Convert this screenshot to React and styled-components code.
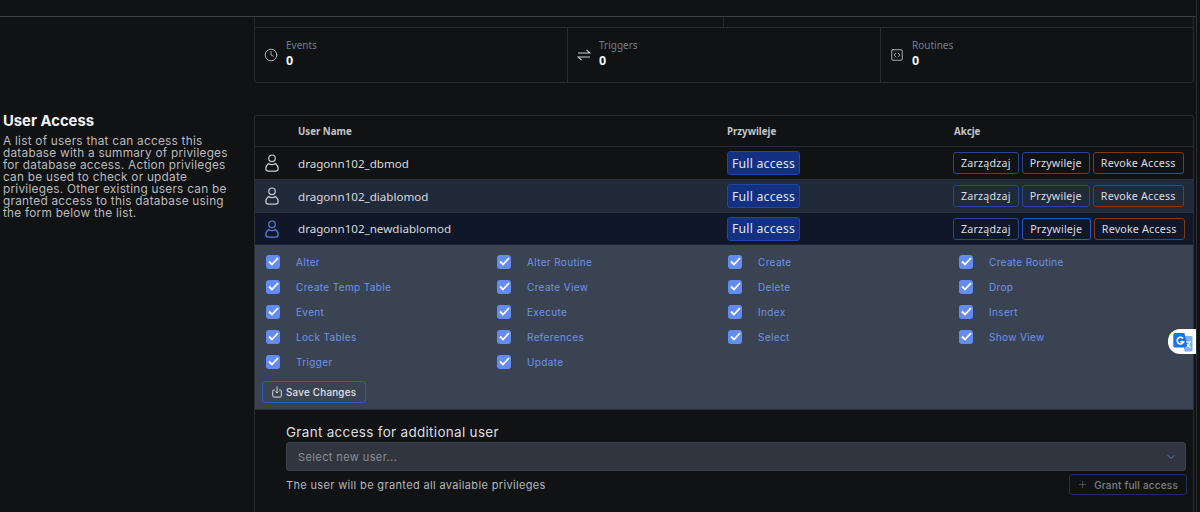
import React from 'react';
import styled, { createGlobalStyle } from 'styled-components';
import { ChevronDown, Clock, Plus, SquareCode } from 'lucide-react';

const users = ['dragonn102_dbmod', 'dragonn102_diablomod', 'dragonn102_newdiablomod'];

const privileges = [
  'Alter', 'Alter Routine', 'Create', 'Create Routine',
  'Create Temp Table', 'Create View', 'Delete', 'Drop',
  'Event', 'Execute', 'Index', 'Insert',
  'Lock Tables', 'References', 'Select', 'Show View',
  'Trigger', 'Update',
];

const UserIcon = ({ color }) => (
  <svg width="14" height="18" viewBox="0 0 14 18" fill="none" stroke={color} strokeWidth="1.2">
    <circle cx="7" cy="4.300" r="3.300" />
    <path d="M3.500 9.500C2 10.800.8 12.600.8 14.500c0 1.500 1 2.600 2.700 2.600h7c1.700 0 2.700-1.100 2.700-2.600 0-1.900-1.200-3.700-2.700-5-1 .8-2.200 1.100-3.500 1.100s-2.500-.3-3.500-1.100z" />
  </svg>
);

const TriggerIcon = () => (
  <svg width="14" height="14" viewBox="0 0 14 14" fill="none" stroke="#c9cbce" strokeWidth="1.1">
    <path d="M1 5h12L9.500 1.800" />
    <path d="M13 9H1l3.500 3.200" />
  </svg>
);

const SaveIcon = () => (
  <svg width="10" height="12" viewBox="0 0 10 12" fill="none" stroke="#d5d8dd" strokeWidth="1">
    <path d="M3 4H1.600a.9.900 0 0 0-.9.900v5c0 .7.500 1.200 1.200 1.200h6.200c.7 0 1.200-.5 1.200-1.200v-5a.9.900 0 0 0-.9-.9H7" />
    <path d="M5 .5v6.500M3.500 5.500 5 7l1.500-1.500" />
  </svg>
);

const TranslateIcon = () => (
  <svg width="20" height="20" viewBox="0 0 20 20">
    <path fill="#7fb0ee" d="M9 4h9a1.500 1.500 0 0 1 1.500 1.500V18a1.500 1.500 0 0 1-1.500 1.500h-6.500z" />
    <path fill="#1a73e8" d="M1.800 1h9.500l4 14.500H1.800A1.500 1.500 0 0 1 .3 14V2.500A1.500 1.500 0 0 1 1.800 1z" />
    <path fill="none" stroke="#fff" strokeWidth="1.500" d="M10 6.500a3.300 3.300 0 1 0 .6 3.200H7.300" />
    <path fill="none" stroke="#fff" strokeWidth="1.200" d="M13 10h5M17 10c-.5 2.500-2 4.500-3.500 5.500M14 12c.8 1.500 2 2.800 3.500 3.500" />
  </svg>
);

const App = () => {
  return (
    <>
      <GlobalStyle />
      <Page>
        <TopBar />
        <Content>
          <CutOffRow>
            <span />
            <span />
          </CutOffRow>
          <StatsCard>
            <Stat>
              <Clock size={14} strokeWidth={1.4} color="#c9cbce" />
              <StatText>
                <StatLabel>Events</StatLabel>
                <StatValue>0</StatValue>
              </StatText>
            </Stat>
            <Stat>
              <TriggerIcon />
              <StatText>
                <StatLabel>Triggers</StatLabel>
                <StatValue>0</StatValue>
              </StatText>
            </Stat>
            <Stat>
              <SquareCode size={14} strokeWidth={1.4} color="#c9cbce" />
              <StatText>
                <StatLabel>Routines</StatLabel>
                <StatValue>0</StatValue>
              </StatText>
            </Stat>
          </StatsCard>

          <AccessSection>
            <Intro>
              <IntroTitle>User Access</IntroTitle>
              <IntroText>
                A list of users that can access this database with a summary of privileges for
                database access. Action privileges can be used to check or update privileges. Other
                existing users can be granted access to this database using the form below the
                list.
              </IntroText>
            </Intro>

            <AccessCard>
              <HeaderRow>
                <span />
                <span>User Name</span>
                <span>Przywileje</span>
                <span>Akcje</span>
              </HeaderRow>

              {users.map((name, i) => {
                const open = i === 2;
                return (
                  <UserRow key={name} $variant={i}>
                    <IconCell>
                      <UserIcon color={open ? '#5b80d8' : '#c8cacd'} />
                    </IconCell>
                    <UserName>{name}</UserName>
                    <div>
                      <AccessBadge>Full access</AccessBadge>
                    </div>
                    <Actions>
                      <ActionButton>Zarządzaj</ActionButton>
                      <ActionButton $selected={open}>Przywileje</ActionButton>
                      <ActionButton $danger>Revoke Access</ActionButton>
                    </Actions>
                  </UserRow>
                );
              })}

              <PrivilegePanel>
                <PrivilegeGrid>
                  {privileges.map(p => (
                    <Privilege key={p}>
                      <CheckBox>
                        <svg width="11" height="9" viewBox="0 0 11 9" fill="none" stroke="#fff" strokeWidth="1.800">
                          <path d="M1 4.500 4 7.500 10 1" />
                        </svg>
                      </CheckBox>
                      <PrivilegeLabel>{p}</PrivilegeLabel>
                    </Privilege>
                  ))}
                </PrivilegeGrid>
                <SaveButton>
                  <SaveIcon />
                  Save Changes
                </SaveButton>
              </PrivilegePanel>

              <GrantForm>
                <GrantTitle>Grant access for additional user</GrantTitle>
                <SelectBox>
                  Select new user...
                  <ChevronDown size={12} color="#5b80d8" />
                </SelectBox>
                <GrantFooter>
                  <GrantNote>The user will be granted all available privileges</GrantNote>
                  <GrantButton>
                    <Plus size={11} strokeWidth={1.4} color="#6b6e74" />
                    Grant full access
                  </GrantButton>
                </GrantFooter>
              </GrantForm>
            </AccessCard>
          </AccessSection>
        </Content>
        <TranslateTab>
          <TranslateIcon />
        </TranslateTab>
      </Page>
    </>
  );
};

const GlobalStyle = createGlobalStyle`
  html, body {
    margin: 0;
    height: 100%;
    overflow: hidden;
    background: #111213;
  }
  * {
    box-sizing: border-box;
  }
`;

const Page = styled.div`
  position: relative;
  width: 1197px;
  height: 512px;
  overflow: hidden;
  background: #111213;
  border-right: 1px solid #2b2d30;
  font-family: 'Noto Sans', sans-serif;
  color: #e5e7eb;
`;

const TopBar = styled.div`
  height: 17px;
  border-bottom: 1px solid #3c3e41;
`;

const Content = styled.div`
  display: flex;
  flex-direction: column;
  padding-right: 2px;
`;

const CutOffRow = styled.div`
  display: grid;
  grid-template-columns: 469px 1fr;
  height: 10px;
  margin-left: 254px;
  border-left: 1px solid #26282b;
  border-right: 1px solid #26282b;

  span:first-child {
    border-right: 1px solid #26282b;
  }
`;

const StatsCard = styled.div`
  display: grid;
  grid-template-columns: 313px 313px 1fr;
  height: 56px;
  margin-left: 254px;
  border: 1px solid #2a2c2f;
  border-radius: 0 0 3px 3px;
`;

const Stat = styled.div`
  display: flex;
  align-items: center;
  gap: 8px;
  padding-left: 9px;
  border-right: 1px solid #2a2c2f;

  &:last-child {
    border-right: 0;
  }
`;

const StatText = styled.div`
  display: flex;
  flex-direction: column;
  margin-top: -2px;
`;

const StatLabel = styled.span`
  font-size: 10px;
  line-height: 13px;
  color: #6c7f92;
`;

const StatValue = styled.span`
  font-size: 12.500px;
  line-height: 17px;
  font-weight: 700;
  color: #f3f5f8;
`;

const AccessSection = styled.div`
  display: grid;
  grid-template-columns: 254px 1fr;
  margin-top: 32px;
`;

const Intro = styled.div`
  padding: 0 18px 0 3px;
  font-family: Inter, sans-serif;
`;

const IntroTitle = styled.h2`
  margin: -3px 0 5px;
  font-size: 14.800px;
  line-height: 18px;
  font-weight: 700;
  color: #f1f2f4;
`;

const IntroText = styled.p`
  margin: 0;
  font-size: 11.800px;
  line-height: 12px;
  letter-spacing: 0.25px;
  color: #b9bbbe;
`;

const AccessCard = styled.div`
  height: 400px;
  border: 1px solid #2a2c2f;
  border-radius: 3px;
  overflow: hidden;
`;

const rowColumns = `
  display: grid;
  grid-template-columns: 43px 429px 226px 1fr;
  align-items: center;
`;

const HeaderRow = styled.div`
  ${rowColumns}
  height: 31px;
  border-bottom: 1px solid #2a2c2f;
  font-size: 9.700px;
  font-weight: 700;
  color: #c4c6c9;

  span:last-child {
    padding-left: 1px;
  }
`;

const rowBackground = ['#111213', '#212a38', '#0f1729'];

const UserRow = styled.div`
  ${rowColumns}
  height: 33px;
  background: ${props => rowBackground[props.$variant]};
  border-bottom: 1px solid ${props => (props.$variant === 2 ? '#1c2433' : '#2a303a')};

  &:nth-child(4) {
    height: 32px;
  }
`;

const IconCell = styled.div`
  display: flex;
  padding-left: 10px;
`;

const UserName = styled.span`
  font-size: 11.600px;
  color: #d8dadd;
`;

const AccessBadge = styled.span`
  display: inline-flex;
  align-items: center;
  justify-content: center;
  width: 73px;
  height: 24px;
  background: #143081;
  border: 1px solid #1e46a6;
  border-radius: 3px;
  font-size: 12.300px;
  letter-spacing: 0.2px;
  color: #dfe5f2;
`;

const Actions = styled.div`
  display: flex;
  gap: 3px;
`;

const ActionButton = styled.button`
  height: 22px;
  padding: 0 ${props => (props.$selected ? '7.500px' : '7px')};
  background: transparent;
  border: ${props => (props.$selected ? '1.500px' : '1px')} solid
    ${props => (props.$danger ? '#7e3a14' : props.$selected ? '#2f5bc0' : '#27478f')};
  border-radius: 3px;
  font-family: 'Noto Sans', sans-serif;
  font-size: 10.700px;
  letter-spacing: 0.2px;
  color: #dcdee2;
`;

const PrivilegePanel = styled.div`
  height: 165px;
  padding: 4px 7px 0 7px;
  background: #3a4352;
  border-bottom: 1px solid #2b313b;
`;

const PrivilegeGrid = styled.div`
  display: grid;
  grid-template-columns: repeat(4, 231px);
  grid-auto-rows: 25px;
  padding-left: 4px;
`;

const Privilege = styled.label`
  display: flex;
  align-items: center;
  gap: 16px;
`;

const CheckBox = styled.span`
  display: flex;
  align-items: center;
  justify-content: center;
  width: 14px;
  height: 14px;
  background: #648cf0;
  border-radius: 3px;
`;

const PrivilegeLabel = styled.span`
  font-family: Inter, sans-serif;
  font-size: 10px;
  letter-spacing: 0.35px;
  color: #6f92ea;
`;

const SaveButton = styled.button`
  display: flex;
  align-items: center;
  gap: 4px;
  height: 22px;
  margin-top: 7px;
  padding: 0 9px;
  background: transparent;
  border: 1px solid #2f5aaf;
  border-radius: 3px;
  font-family: Inter, sans-serif;
  font-size: 9.800px;
  font-weight: 500;
  letter-spacing: 0.25px;
  color: #e1e4ea;
`;

const GrantForm = styled.div`
  padding: 13px 6px 0 31px;
`;

const GrantTitle = styled.div`
  font-family: Inter, sans-serif;
  font-size: 13.500px;
  line-height: 18px;
  letter-spacing: 0.3px;
  color: #dcdee1;
`;

const SelectBox = styled.div`
  display: flex;
  align-items: center;
  justify-content: space-between;
  width: 900px;
  height: 29px;
  margin-top: 1px;
  padding: 0 8px 0 11px;
  background: #30353f;
  border: 1px solid #3b404a;
  border-radius: 3px;
  font-family: Inter, sans-serif;
  font-size: 11px;
  letter-spacing: 0.4px;
  color: #8a8e95;
`;

const GrantFooter = styled.div`
  display: flex;
  align-items: center;
  justify-content: space-between;
  margin-top: 3px;
`;

const GrantNote = styled.span`
  font-family: Inter, sans-serif;
  font-size: 11px;
  letter-spacing: 0.35px;
  color: #b4b7bb;
`;

const GrantButton = styled.button`
  display: flex;
  align-items: center;
  gap: 6px;
  height: 21px;
  padding: 0 8px 0 7px;
  background: transparent;
  border: 1px solid #1d2f5c;
  border-radius: 3px;
  font-family: Inter, sans-serif;
  font-size: 10px;
  font-weight: 500;
  letter-spacing: 0.2px;
  color: #7d8086;
`;

const TranslateTab = styled.div`
  position: absolute;
  top: 329px;
  right: 0;
  display: flex;
  align-items: center;
  width: 28px;
  height: 25px;
  padding-left: 5px;
  background: #fff;
  border-radius: 12px 0 0 12px;
`;

export default App;
